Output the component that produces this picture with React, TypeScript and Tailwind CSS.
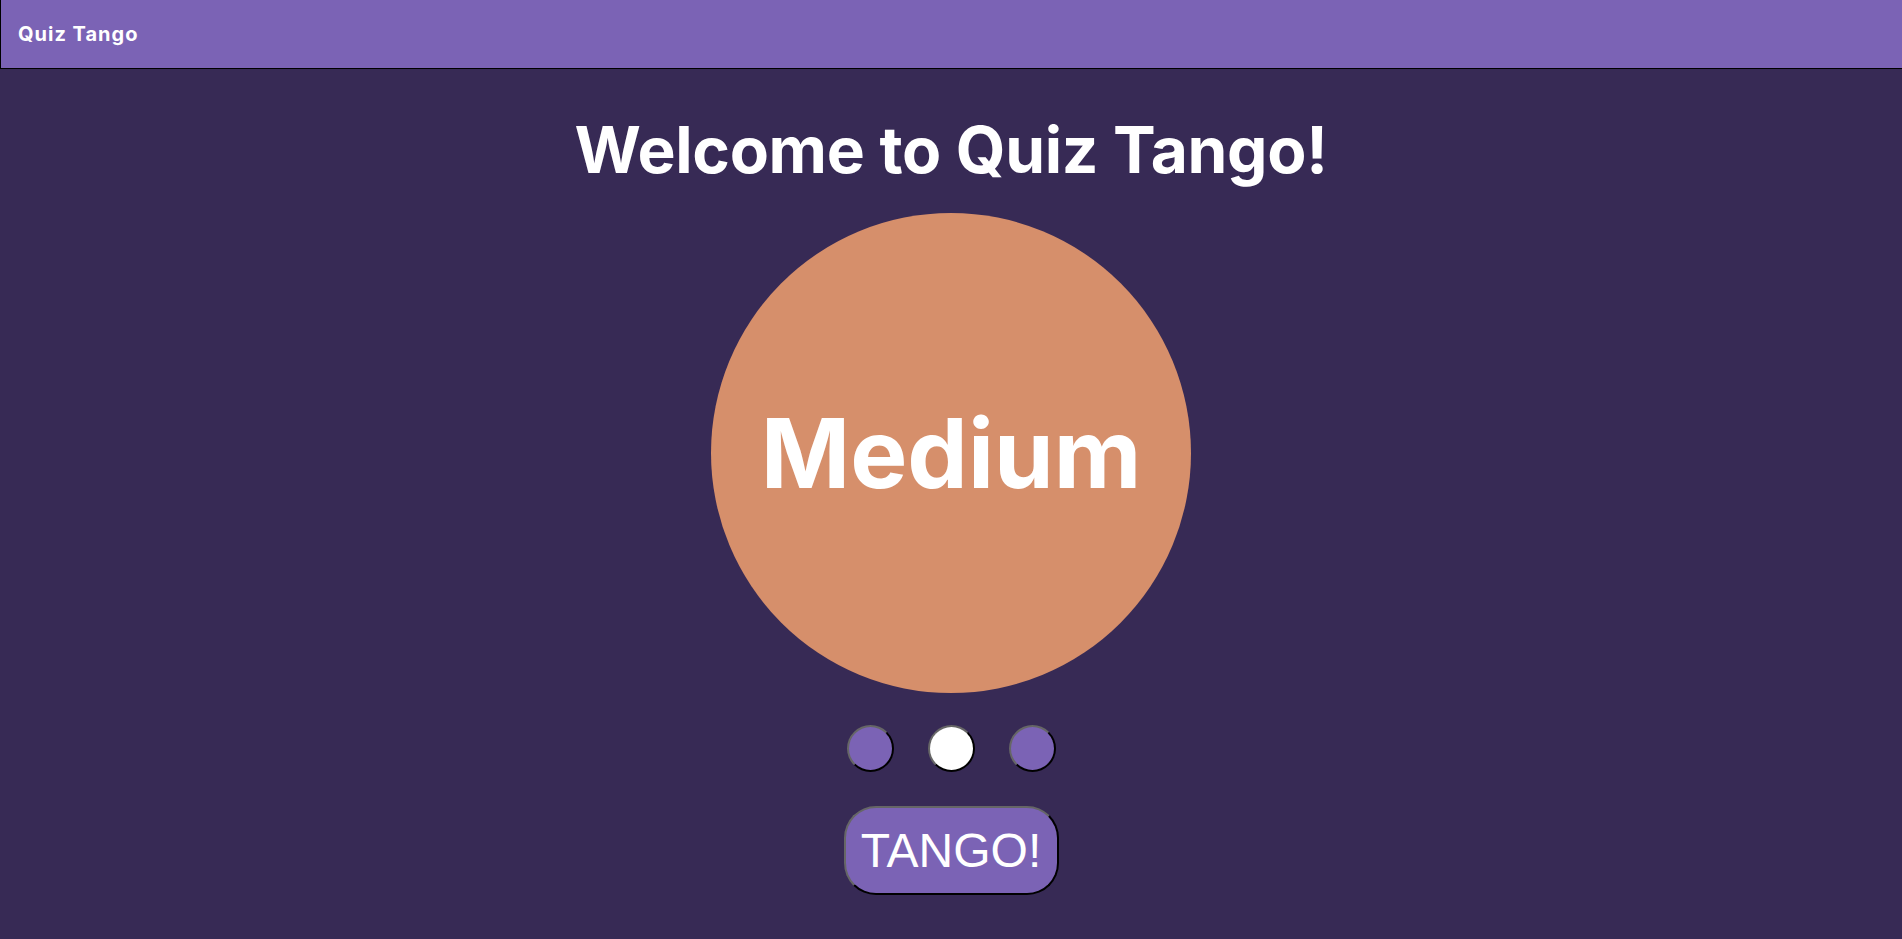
const dots = [false, true, false];

export default function App() {
  return (
    <div className="min-h-[939px] bg-[#372a55] font-['Inter',sans-serif] text-white">
      <header className="flex h-[69px] items-center border-b border-l border-black bg-[#7b63b5] pl-[17px]">
        <span className="text-[20px] font-bold tracking-[1px]">Quiz Tango</span>
      </header>
      <main className="flex flex-col items-center">
        <h1 className="mt-[49px] text-[64px] font-bold leading-none tracking-[-0.3px]">Welcome to Quiz Tango!</h1>
        <div className="mt-[31px] flex h-[480px] w-[480px] items-center justify-center rounded-full bg-[#d68f6b]">
          <span className="text-[96px] font-bold leading-none">Medium</span>
        </div>
        <div className="mt-[32px] flex gap-[34px]">
          {dots.map((active, i) => (
            <button
              key={i}
              className={`h-[47px] w-[47px] rounded-full border-2 border-t-[#666] border-l-[#666] border-r-black border-b-black ${
                active ? "bg-white" : "bg-[#7b63b5]"
              }`}
            />
          ))}
        </div>
        <button className="mt-[34px] h-[89px] w-[215px] rounded-[32px] border-2 border-t-[#666] border-l-[#666] border-r-black border-b-black bg-[#7b63b5] font-['Liberation_Sans',Arial,sans-serif] text-[48px] text-white">
          TANGO!
        </button>
      </main>
    </div>
  );
}
